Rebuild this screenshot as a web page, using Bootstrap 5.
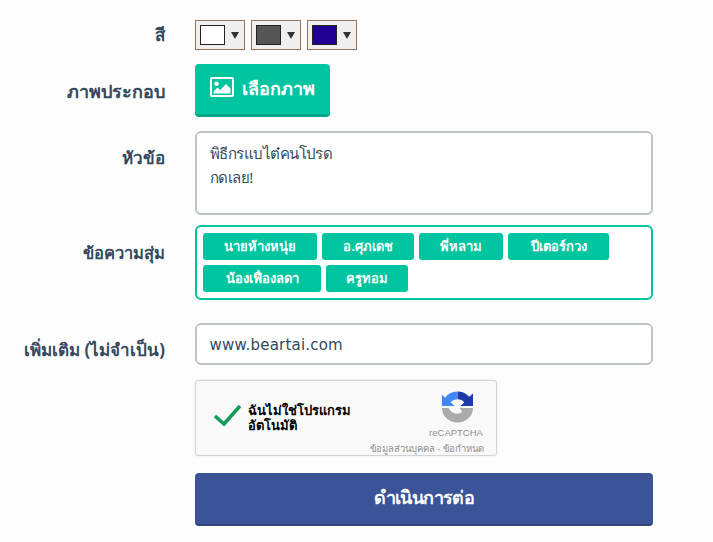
<!DOCTYPE html>
<html lang="th">
<head>
<meta charset="utf-8">
<title>ฟอร์ม</title>
<link rel="stylesheet" href="https://cdn.jsdelivr.net/npm/bootstrap@5.3.0/dist/css/bootstrap.min.css">
<style>
html,body{height:542px;overflow:hidden}
body{background:#fdfdfd;font-family:"Open Sans","Noto Sans","DejaVu Sans",sans-serif;color:#34495e}
.pageform{padding-top:20px;width:653px}
.frow{display:flex;gap:30px}
.frow-color{height:44px}
.frow-pick{height:67px}
.frow-msg{height:94px}
.frow-tags{height:98px}
.frow-url{height:57px}
.frow-cap{height:93px}
.flabel{width:165px;flex:none;text-align:right;font-size:17px;font-weight:700;color:#34495e;line-height:24px;white-space:nowrap}
.lab-color{padding-top:3px}
.lab-pick{padding-top:15px;font-size:18px}
.lab-msg{padding-top:15px}
.lab-tags{padding-top:16px;font-size:16.500px}
.lab-url{padding-top:15px}
.ffield{flex:1;min-width:0}
.swatchrow{display:flex;gap:6px;align-items:flex-start}
.swatchbtn{width:50px;height:30px;border:1px solid #96755c;background:#efefef;display:flex;align-items:center;padding:0 4px;gap:6px}
.swatchbox{width:25px;height:20px;border:1px solid #222}
.sw-white{background:#fff}
.sw-gray{background:#555}
.sw-navy{background:#200092}
.swatchcaret{width:0;height:0;border-left:4px solid transparent;border-right:4px solid transparent;border-top:7px solid #333}
.pickbtn{width:135px;height:53px;background:#00c5a0;border:0;border-bottom:3px solid #00a688;border-radius:4px;color:#fff;font-weight:700;font-size:18px;display:flex;align-items:center;justify-content:center;gap:8px;padding:0 0 4px}
.picklabel{padding-top:2px}
.msgbox{height:84px;border:2px solid #bdc3c7;border-radius:6px;background:#fff;padding:8px 13px;font-size:15px;letter-spacing:-.55px;line-height:24px;color:#34495e}
.tagbox{border:2px solid #00c5a0;border-radius:6px;background:#fff;padding:6px;display:flex;flex-wrap:wrap;gap:5px;height:75px;align-content:flex-start}
.tagitem{height:27px;background:#00c5a0;color:#fff;border-radius:3px;font-size:13px;font-weight:700;line-height:27px;text-align:center}
.tw-a{width:114px}.tw-b{width:92px}.tw-c{width:84px}.tw-d{width:101px}.tw-e{width:118px}.tw-f{width:82px}
.urlbox{height:42px;border:2px solid #bdc3c7;border-radius:6px;background:#fff;padding:0 12.500px;font-size:15px;line-height:41px;color:#34495e;font-family:"DejaVu Sans",sans-serif;letter-spacing:.2px}
.captcha{width:302px;height:76px;border:1px solid #d3d3d3;border-radius:3px;background:#f9f9f9;box-shadow:0 0 3px rgba(0,0,0,.08);display:flex;position:relative}
.captick{margin:22px 0 0 17px;flex:none}
.captext{margin:22px 0 0 5px;font-size:13px;line-height:15px;color:#000;font-weight:600;width:120px}
.capbrand{position:absolute;right:12px;top:10px;width:56px;text-align:center;font:9.500px/12px "Liberation Sans",sans-serif;color:#8f8f8f}
.caplogo{display:block;margin:0 0 4px 14px}
.capterms{position:absolute;right:12px;bottom:0;font-size:9.500px;line-height:12px;color:#8f8f8f;white-space:nowrap}
.gobtn{height:53px;width:100%;background:#3b5498;border:0;border-bottom:2px solid #2e4379;border-radius:4px;color:#fff;font-size:18px;font-weight:700;letter-spacing:-.6px;padding:0 0 3px}
</style>
</head>
<body>
<form class="pageform">
  <div class="frow frow-color">
    <div class="flabel lab-color">สี</div>
    <div class="ffield swatchrow">
      <div class="swatchbtn"><span class="swatchbox sw-white"></span><span class="swatchcaret"></span></div>
      <div class="swatchbtn"><span class="swatchbox sw-gray"></span><span class="swatchcaret"></span></div>
      <div class="swatchbtn"><span class="swatchbox sw-navy"></span><span class="swatchcaret"></span></div>
    </div>
  </div>
  <div class="frow frow-pick">
    <div class="flabel lab-pick">ภาพประกอบ</div>
    <div class="ffield">
      <button type="button" class="pickbtn">
        <svg width="24" height="20" viewBox="0 0 24 20"><path fill="#fff" fill-rule="evenodd" d="M2 0h20a2 2 0 0 1 2 2v16a2 2 0 0 1-2 2H2a2 2 0 0 1-2-2V2a2 2 0 0 1 2-2zm0 2v16h20V2zm1.500 14.500v-2l4-4 2.500 2.500 6-6 4.500 4.500v5zM6.500 4.500a2.300 2.300 0 1 1 0 4.600 2.300 2.300 0 0 1 0-4.600z"/></svg>
        <span class="picklabel">เลือกภาพ</span>
      </button>
    </div>
  </div>
  <div class="frow frow-msg">
    <div class="flabel lab-msg">หัวข้อ</div>
    <div class="ffield"><div class="msgbox">พิธีกรแบไต๋คนโปรด<br>กดเลย!</div></div>
  </div>
  <div class="frow frow-tags">
    <div class="flabel lab-tags">ข้อความสุ่ม</div>
    <div class="ffield"><div class="tagbox">
      <span class="tagitem tw-a">นายห้างหนุ่ย</span>
      <span class="tagitem tw-b">อ.ศุภเดช</span>
      <span class="tagitem tw-c">พี่หลาม</span>
      <span class="tagitem tw-d">ปีเตอร์กวง</span>
      <span class="tagitem tw-e">น้องเฟื่องลดา</span>
      <span class="tagitem tw-f">ครูทอม</span>
    </div></div>
  </div>
  <div class="frow frow-url">
    <div class="flabel lab-url">เพิ่มเติม (ไม่จำเป็น)</div>
    <div class="ffield"><div class="urlbox">www.beartai.com</div></div>
  </div>
  <div class="frow frow-cap">
    <div class="flabel"></div>
    <div class="ffield"><div class="captcha">
      <svg class="captick" width="30" height="26" viewBox="0 0 30 26"><path d="M2 13l9 8L27 3" fill="none" stroke="#0f9d58" stroke-width="3.500"/></svg>
      <div class="captext">ฉันไม่ใช่โปรแกรม<br>อัตโนมัติ</div>
      <div class="capbrand">
        <svg class="caplogo" width="31" height="32" viewBox="0 0 32 32"><path fill="#1c3aa9" d="M16 0a16 16 0 0 1 12 5.500L32 2v13H19l4-4a8 8 0 0 0-7-3z"/><path fill="#4285f4" d="M16 0A16 16 0 0 0 3 6.500L0 3v12h13l-4-4c2-2 4-3 7-3z"/><path fill="#ababab" d="M0 17h7a9 9 0 0 0 14 4l-3-4h14a16 15 0 0 1-32 0z"/></svg>
        reCAPTCHA
      </div>
      <div class="capterms">ข้อมูลส่วนบุคคล - ข้อกำหนด</div>
    </div></div>
  </div>
  <div class="frow">
    <div class="flabel"></div>
    <div class="ffield"><button type="button" class="gobtn">ดำเนินการต่อ</button></div>
  </div>
</form>
</body>
</html>
